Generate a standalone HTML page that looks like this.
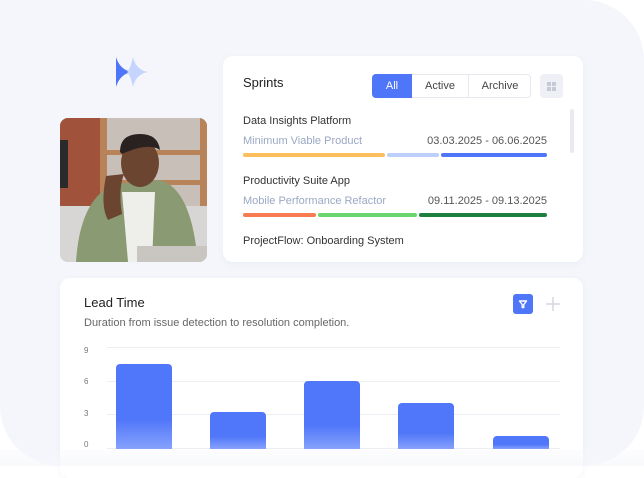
<!DOCTYPE html>
<html><head><meta charset="utf-8"><style>
*{margin:0;padding:0;box-sizing:border-box}
body{width:644px;height:466px;background:#fff;position:relative;overflow:hidden;font-family:"Liberation Sans",sans-serif;}
.panel{position:absolute;left:0;top:0;width:644px;height:466px;background:#f4f6fb;border-radius:0 60px 60px 60px}
.card{position:absolute;background:#fff;border-radius:10px;box-shadow:0 2px 8px rgba(60,80,140,.05)}
.t{position:absolute;white-space:nowrap}
.bar{position:absolute;height:4px;border-radius:2px}
.grid{position:absolute;left:107px;width:453px;height:1px;background:#eceef3}
.yl{position:absolute;left:84px;font-size:8px;color:#777}
.b{position:absolute;width:56px;background:linear-gradient(#5076fa 65%,#86a2fb);border-radius:4px 4px 0 0}
</style></head><body>
<div class="panel"></div>
<svg style="position:absolute;left:112px;top:55px" width="40" height="34" viewBox="112 55 40 34">
<path d="M116 57 Q120 70 132 72 Q120 74 116 87 Z" fill="#4f75f8"/>
<path d="M133 57 Q136 70 148 72 Q136 74 133 87 Q130 74 127 72 Q130 70 133 57 Z" fill="#c5d5fd"/>
</svg>
<svg style="position:absolute;left:60px;top:118px;border-radius:8px" width="147" height="144" viewBox="0 0 147 144">
<rect width="147" height="144" fill="#b8aca0"/>
<rect width="42" height="90" fill="#a0533a"/>
<rect x="0" y="22" width="8" height="48" fill="#2a2a2a"/>
<rect x="40" y="0" width="107" height="95" fill="#c8c0b8"/>
<rect x="40" y="0" width="7" height="95" fill="#b9835a"/>
<rect x="40" y="32" width="107" height="5" fill="#b9835a"/>
<rect x="40" y="62" width="107" height="5" fill="#b9835a"/>
<rect x="140" y="0" width="7" height="95" fill="#b9835a"/>
<rect x="0" y="88" width="147" height="56" fill="#d8d6d4"/>
<path d="M16 144 Q20 80 55 66 L100 62 Q128 70 136 128 L136 144 Z" fill="#8a9a72"/>
<path d="M62 74 L95 74 L92 144 L68 144 Z" fill="#eeeeea"/>
<ellipse cx="80" cy="45" rx="19" ry="24" fill="#6b4530"/>
<path d="M60 34 Q60 16 80 16 Q98 16 100 32 Q88 24 62 36Z" fill="#2a2220"/>
<path d="M46 58 Q40 88 48 102 L62 96 Q58 72 64 56 Z" fill="#6b4530"/>
<rect x="77" y="128" width="70" height="16" fill="#c9c5c0"/>
</svg>
<div class="card" style="left:223px;top:56px;width:360px;height:206px">
<div class="t" style="left:20px;top:19px;font-size:13px;color:#222">Sprints</div>
<div style="position:absolute;left:149px;top:18px;width:159px;height:24px;border:1px solid #e6e8ee;border-radius:4px;font-size:11px;color:#444">
<div style="position:absolute;left:-1px;top:-1px;width:40px;height:24px;background:#4f75f8;border-radius:4px 0 0 4px;color:#fff;text-align:center;line-height:24px">All</div>
<div style="position:absolute;left:39px;top:0;width:57px;height:22px;text-align:center;line-height:22px;border-right:1px solid #e6e8ee">Active</div>
<div style="position:absolute;left:96px;top:0;width:62px;height:22px;text-align:center;line-height:22px">Archive</div>
</div>
<div style="position:absolute;left:317px;top:18px;width:23px;height:24px;background:#eef0f5;border-radius:4px">
<div style="position:absolute;left:7px;top:8px;width:4px;height:4px;background:#c5cad6"></div><div style="position:absolute;left:12px;top:8px;width:4px;height:4px;background:#c5cad6"></div>
<div style="position:absolute;left:7px;top:13px;width:4px;height:4px;background:#c5cad6"></div><div style="position:absolute;left:12px;top:13px;width:4px;height:4px;background:#c5cad6"></div>
</div>
<div style="position:absolute;left:347px;top:53px;width:4px;height:44px;background:#e8eaef;border-radius:2px"></div>
<div class="t" style="left:20px;top:59px;font-size:11px;color:#333">Data Insights Platform</div>
<div class="t" style="left:20px;top:79px;font-size:11px;color:#9aa8c4">Minimum Viable Product</div>
<div class="t" style="right:36px;top:79px;font-size:11px;color:#555">03.03.2025 - 06.06.2025</div>
<div class="bar" style="left:20px;top:97px;width:142px;background:#fbbf5e"></div>
<div class="bar" style="left:164px;top:97px;width:52px;background:#bcd0fb"></div>
<div class="bar" style="left:218px;top:97px;width:106px;background:#4f75f8"></div>
<div class="t" style="left:20px;top:119px;font-size:11px;color:#333">Productivity Suite App</div>
<div class="t" style="left:20px;top:139px;font-size:11px;color:#9aa8c4">Mobile Performance Refactor</div>
<div class="t" style="right:36px;top:139px;font-size:11px;color:#555">09.11.2025 - 09.13.2025</div>
<div class="bar" style="left:20px;top:157px;width:73px;background:#f87b52"></div>
<div class="bar" style="left:95px;top:157px;width:99px;background:#6dd56e"></div>
<div class="bar" style="left:196px;top:157px;width:128px;background:#1f7f3e"></div>
<div class="t" style="left:20px;top:179px;font-size:11px;color:#333">ProjectFlow: Onboarding System</div>
</div>
<div class="card" style="left:60px;top:278px;width:523px;height:200px;border-radius:10px"></div>
<div class="t" style="left:84px;top:295px;font-size:13px;color:#222">Lead Time</div>
<div class="t" style="left:84px;top:317px;font-size:11px;color:#666">Duration from issue detection to resolution completion.</div>
<div style="position:absolute;left:513px;top:294px;width:20px;height:20px;background:#4f75f8;border-radius:3px">
<svg width="20" height="20" viewBox="0 0 20 20"><path d="M6.5 7 H13.5 L10.8 10.5 V13.5 H9.2 V10.5 Z" fill="none" stroke="#fff" stroke-width="1.4" stroke-linejoin="round"/></svg></div>
<svg style="position:absolute;left:545px;top:296px" width="16" height="16"><path d="M8 1V15M1 8H15" stroke="#d3d7df" stroke-width="1.5"/></svg>
<div class="grid" style="top:347px"></div><div class="grid" style="top:381px"></div><div class="grid" style="top:414px"></div><div class="grid" style="top:448px"></div>
<div class="yl" style="top:346px">9</div><div class="yl" style="top:377px">6</div><div class="yl" style="top:409px">3</div><div class="yl" style="top:440px">0</div>
<div class="b" style="left:116px;top:364px;height:85px"></div>
<div class="b" style="left:210px;top:412px;height:37px"></div>
<div class="b" style="left:304px;top:381px;height:68px"></div>
<div class="b" style="left:398px;top:403px;height:46px"></div>
<div class="b" style="left:493px;top:436px;height:13px"></div>
<div style="position:absolute;left:0;top:450px;width:644px;height:16px;background:linear-gradient(rgba(246,247,251,.3),rgba(246,247,251,.7))"></div>
</body></html>
